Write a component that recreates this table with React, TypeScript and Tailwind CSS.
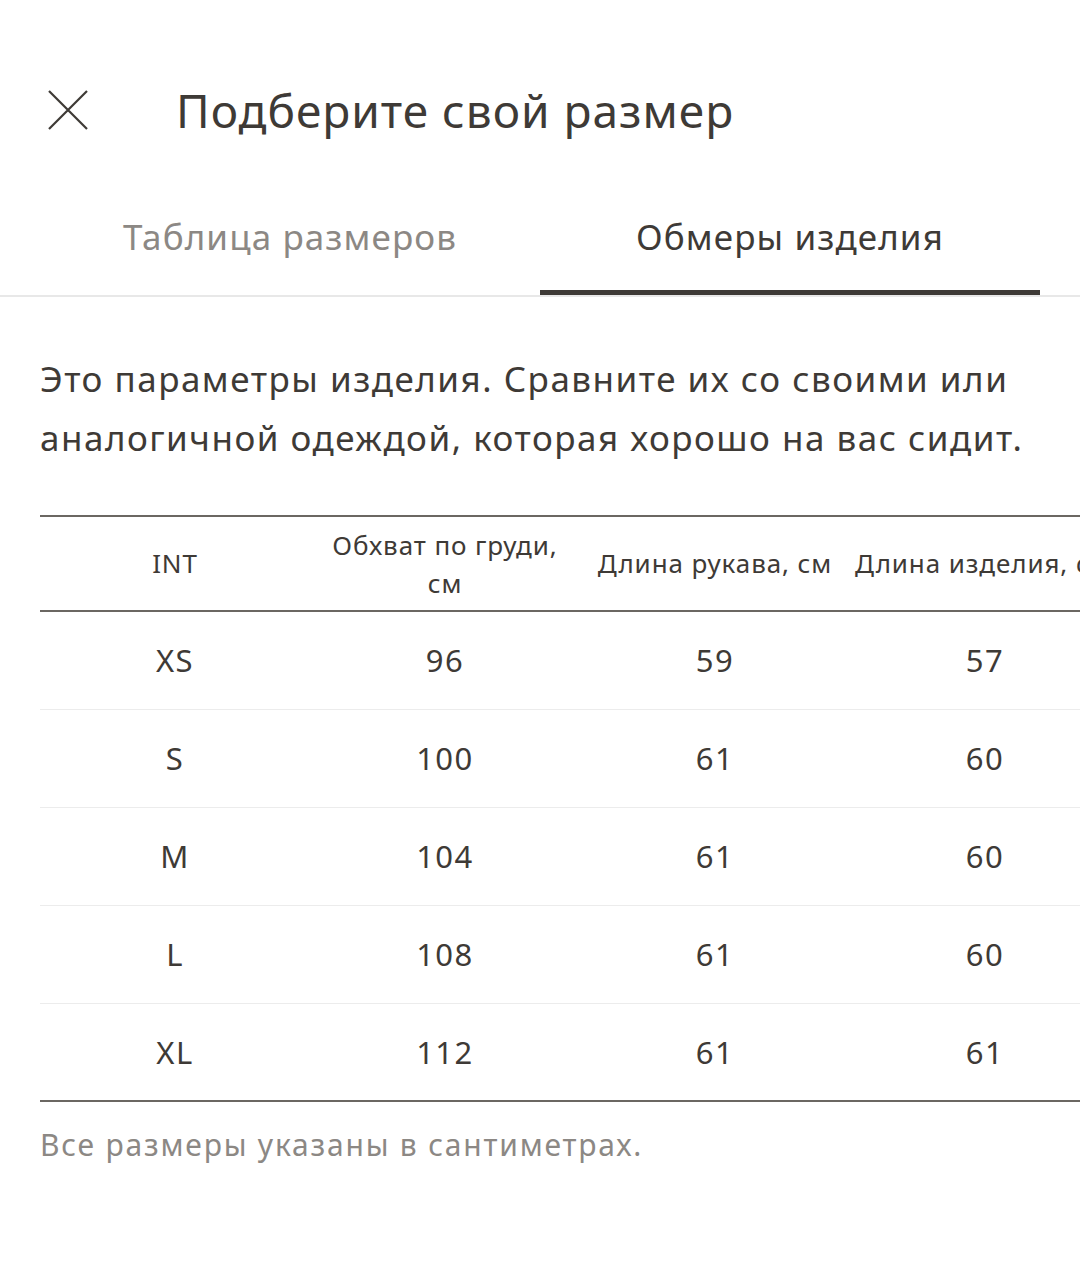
import React from 'react';

const rows = [
  ['XS', '96', '59', '57'],
  ['S', '100', '61', '60'],
  ['M', '104', '61', '60'],
  ['L', '108', '61', '60'],
  ['XL', '112', '61', '61'],
];

export default function App() {
  return (
    <div
      className="w-[1080px] h-[1280px] bg-white overflow-hidden text-[#3e3a36]"
      style={{ fontFamily: '"Noto Sans", "Open Sans", sans-serif' }}
    >
      {/* header */}
      <div className="flex items-center h-[150px] pt-[70px] pl-[48px]">
        <svg width="40" height="40" viewBox="0 0 40 40" className="shrink-0">
          <path d="M1 1 L39 39 M39 1 L1 39" stroke="#3e3a36" strokeWidth="2.2" fill="none" />
        </svg>
        <h1 className="ml-[88px] text-[46px] leading-none tracking-[1px]">Подберите свой размер</h1>
      </div>

      {/* tabs */}
      <div className="flex border-b-2 border-[#e8e8e8] px-[40px]">
        <button className="w-[500px] h-[145px] pt-[29px] flex items-center justify-center text-[35px] text-[#8c8884] tracking-[1.1px]">
          Таблица размеров
        </button>
        <button className="w-[500px] h-[145px] pt-[29px] flex items-center justify-center text-[35px] tracking-[1.1px] relative">
          Обмеры изделия
          <span className="absolute left-0 right-0 bottom-0 h-[5px] bg-[#3e3a36]" />
        </button>
      </div>

      {/* description */}
      <p className="px-[40px] mt-[52px] text-[35px] leading-[59px] tracking-[1.5px]">
        Это параметры изделия. Сравните их со своими или аналогичной одеждой, которая хорошо на вас сидит.
      </p>

      {/* table, cut at the right edge as in a scrolled view */}
      <div className="ml-[40px] mt-[48px] overflow-hidden">
        <div className="w-[1080px]">
          <div className="grid grid-cols-[270px_270px_270px_270px] border-y-2 border-[#6b6762] h-[97px] items-center text-[26px] tracking-[0.9px] text-center">
            <div>INT</div>
            <div className="leading-[38px]">
              Обхват по груди,
              <br />
              см
            </div>
            <div className="whitespace-nowrap">Длина рукава, см</div>
            <div className="whitespace-nowrap text-left pl-[5px]">Длина изделия, см</div>
          </div>
          {rows.map((r, i) => (
            <div
              key={r[0]}
              className={`grid grid-cols-[270px_270px_270px_270px] h-[98px] items-center text-[31px] text-center tracking-[1.5px] ${
                i === rows.length - 1 ? 'border-b-2 border-[#6b6762]' : 'border-b border-[#ececec]'
              }`}
            >
              {r.map((c, j) => (
                <div key={j}>{c}</div>
              ))}
            </div>
          ))}
        </div>
      </div>

      <p className="px-[40px] mt-[20px] text-[30px] text-[#8c8884] tracking-[1.8px]">
        Все размеры указаны в сантиметрах.
      </p>
    </div>
  );
}
